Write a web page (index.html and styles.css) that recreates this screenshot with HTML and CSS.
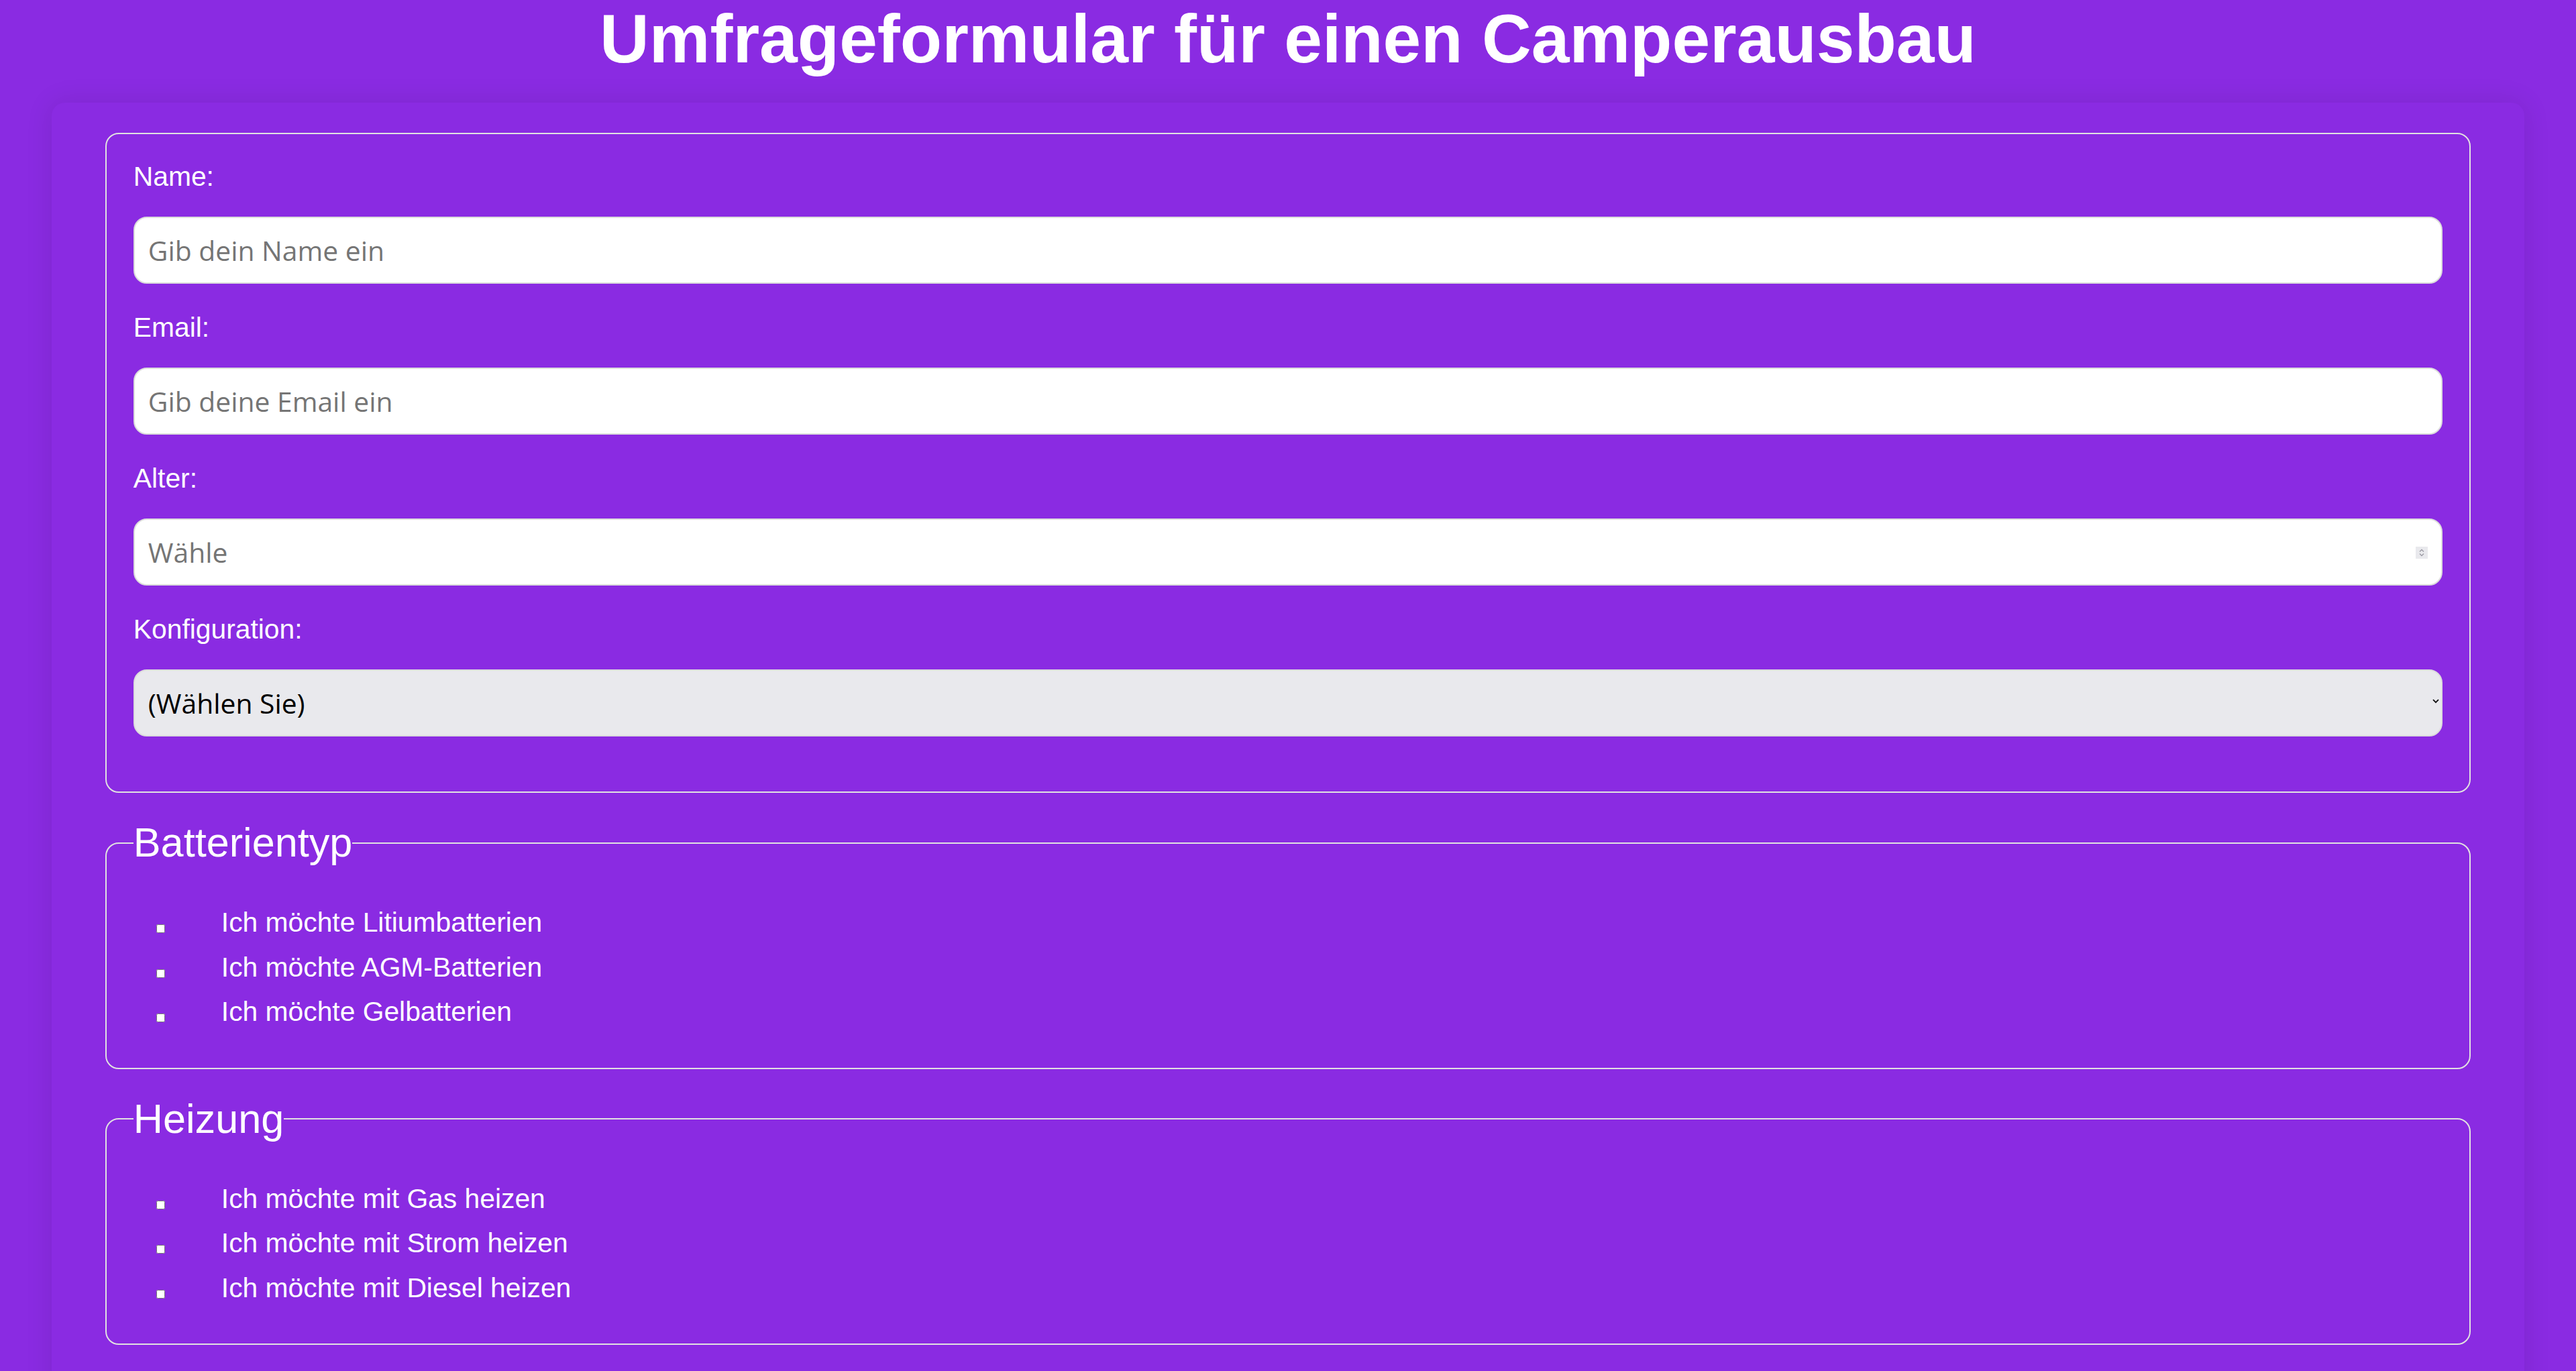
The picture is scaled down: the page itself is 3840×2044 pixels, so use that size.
FILE: index.html
```html
<!DOCTYPE html>
<html lang="de">
<head>
<meta charset="utf-8">
<title>Umfrageformular für einen Camperausbau</title>
<link rel="stylesheet" href="styles.css">
</head>
<body>
<h1 class="title">Umfrageformular für einen Camperausbau</h1>
<form class="survey">
  <fieldset class="group">
    <label class="field-label" for="name">Name:</label>
    <input class="field" id="name" type="text" placeholder="Gib dein Name ein">
    <label class="field-label" for="email">Email:</label>
    <input class="field" id="email" type="email" placeholder="Gib deine Email ein">
    <label class="field-label" for="age">Alter:</label>
    <div class="control-wrap">
      <input class="field number" id="age" type="number" placeholder="Wähle">
      <span class="spin"><svg width="18" height="18" viewBox="0 0 18 18"><path d="M6 7.5 L9 4.5 L12 7.5" fill="none" stroke="#9b9aa3" stroke-width="1.3"/><path d="M6 10.5 L9 13.5 L12 10.5" fill="none" stroke="#9b9aa3" stroke-width="1.3"/></svg></span>
    </div>
    <label class="field-label" for="config">Konfiguration:</label>
    <div class="control-wrap">
      <select class="field select" id="config">
        <option>(Wählen Sie)</option>
      </select>
      <svg class="select-arrow" width="10" height="7" viewBox="0 0 10 7"><path d="M1 1.2 L5 5.2 L9 1.2" fill="none" stroke="#111" stroke-width="1.8"/></svg>
    </div>
  </fieldset>
  <fieldset class="group">
    <legend class="legend">Batterientyp</legend>
    <ul class="options">
      <li class="option"><input class="check" type="checkbox"><span class="option-text">Ich möchte Litiumbatterien</span></li>
      <li class="option"><input class="check" type="checkbox"><span class="option-text">Ich möchte AGM-Batterien</span></li>
      <li class="option"><input class="check" type="checkbox"><span class="option-text">Ich möchte Gelbatterien</span></li>
    </ul>
  </fieldset>
  <fieldset class="group">
    <legend class="legend">Heizung</legend>
    <ul class="options">
      <li class="option"><input class="check" type="checkbox"><span class="option-text">Ich möchte mit Gas heizen</span></li>
      <li class="option"><input class="check" type="checkbox"><span class="option-text">Ich möchte mit Strom heizen</span></li>
      <li class="option"><input class="check" type="checkbox"><span class="option-text">Ich möchte mit Diesel heizen</span></li>
    </ul>
  </fieldset>
</form>
</body>
</html>
```
FILE: styles.css
```css
body {
  margin: 0;
  background: #8a2be2;
  color: #fff;
  font-family: "Liberation Sans", Arial, sans-serif;
}

.title {
  margin: 0 0 37px;
  padding-top: 1px;
  font-size: 102px;
  line-height: 115px;
  font-weight: bold;
  text-align: center;
}

.survey {
  box-sizing: border-box;
  width: 96%;
  margin: 0 auto;
  padding: 45px 80px 40px;
  border-radius: 20px;
  background: #8a2be2;
  box-shadow: 0 0 40px rgba(0, 0, 0, 0.1);
}

.group {
  margin: 0 0 40px;
  padding: 40px;
  border: 2px solid #e1e1e1;
  border-radius: 20px;
}

.field-label {
  display: block;
  margin-bottom: 36px;
  font-size: 40.8px;
  line-height: normal;
}

.field {
  display: block;
  box-sizing: border-box;
  width: 100%;
  height: 100px;
  margin: 0 0 42px;
  padding: 0 20px;
  border: 2px solid #dcdcdc;
  border-radius: 20px;
  background: #fff;
  color: #000;
  font-family: "Open Sans", "Noto Sans", sans-serif;
  font-size: 40.8px;
  outline: none;
}

.field::placeholder {
  color: #757575;
}

.number {
  appearance: textfield;
  -moz-appearance: textfield;
}

.number::-webkit-inner-spin-button,
.number::-webkit-outer-spin-button {
  -webkit-appearance: none;
  margin: 0;
}

.control-wrap {
  position: relative;
}

.spin {
  position: absolute;
  top: 42px;
  right: 22px;
  width: 18px;
  height: 18px;
  background: #e9e9ed;
}

.spin svg {
  display: block;
}

.select {
  appearance: none;
  -webkit-appearance: none;
  padding: 0 20px;
  background: #e9e9ed;
}

.select-arrow {
  position: absolute;
  top: 44px;
  right: 5px;
  display: block;
}

.legend {
  padding: 0;
  font-size: 61.2px;
  line-height: 69px;
  color: #fff;
}

.options {
  margin: 11px 0 10px;
  padding: 0;
  list-style: none;
}

.option {
  font-size: 40.8px;
  line-height: 66.5px;
  white-space: nowrap;
}

.check {
  width: 13px;
  height: 13px;
  margin: 0 0 0 34px;
  vertical-align: -2px;
}

.option-text {
  margin-left: 84px;
}
```
